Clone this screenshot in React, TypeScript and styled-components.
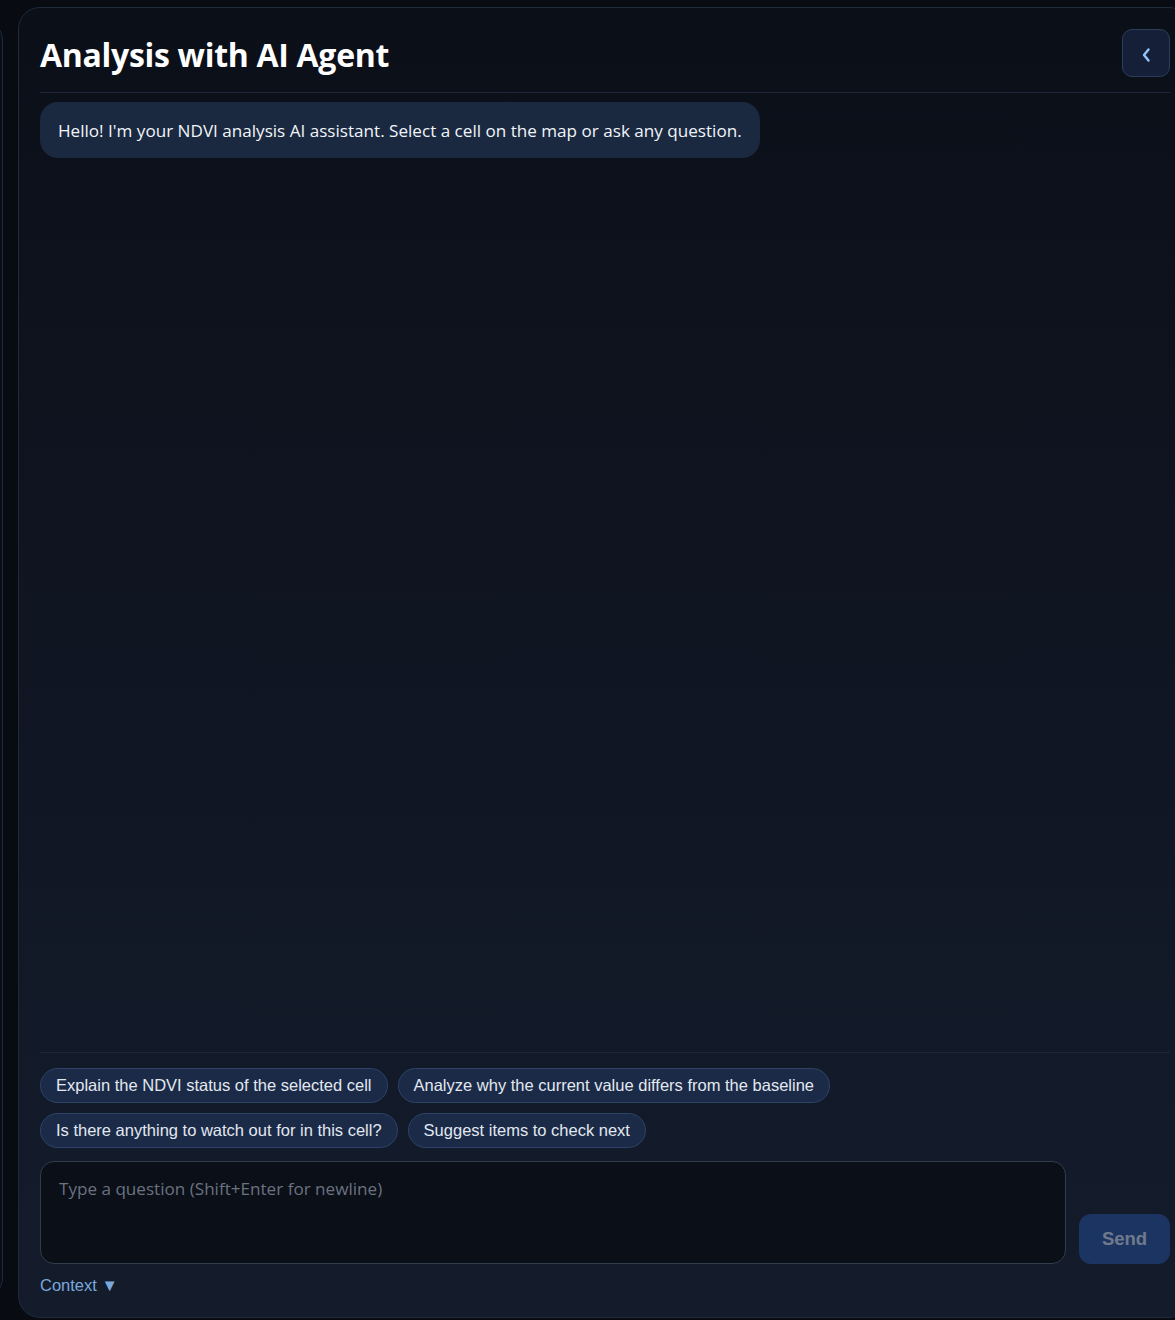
import React from "react";
import styled, { createGlobalStyle } from "styled-components";

const COLORS = {
  page: "#080b11",
  border: "#1f2a3b",
  divider: "#1c2636",
  bubble: "#1a2840",
  chip: "#1a2a47",
  chipBorder: "#2d4468",
  text: "#f1f5f9",
  muted: "#6b7280",
  link: "#7aa7dc",
};

const GlobalStyle = createGlobalStyle`
  html, body {
    margin: 0;
    padding: 0;
    background: ${COLORS.page};
    overflow: hidden;
  }
  * {
    box-sizing: border-box;
  }
`;

const Layout = styled.div`
  display: flex;
  gap: 15px;
  height: 1320px;
  padding: 7px 0 2px 0;
`;

const MapPanel = styled.aside`
  flex: 0 0 240px;
  margin-left: -237px;
  margin-top: 13px;
  margin-bottom: 20px;
  background: #0a0e16;
  border: 1px solid ${COLORS.border};
  border-radius: 20px;
`;

const ChatPanel = styled.section`
  flex: 0 0 1173px;
  display: flex;
  flex-direction: column;
  padding: 0 20px 0 21px;
  background: linear-gradient(180deg, #0b0f18 0%, #141c2c 100%);
  border: 1px solid ${COLORS.border};
  border-radius: 22px;
`;

const Header = styled.header`
  display: flex;
  align-items: center;
  justify-content: space-between;
  height: 85px;
  padding-top: 6px;
  border-bottom: 1px solid ${COLORS.divider};
`;

const Title = styled.h1`
  margin: 3px 0 0 0;
  font-family: "Open Sans", "Noto Sans", sans-serif;
  font-size: 32px;
  font-weight: 700;
  color: #ffffff;
  letter-spacing: -0.3px;
`;

const ToggleButton = styled.button`
  width: 48px;
  height: 48px;
  display: flex;
  align-items: center;
  justify-content: center;
  padding: 4px 0 0 0;
  background: #152038;
  border: 1px solid #2c3d5c;
  border-radius: 10px;
  color: #93c5fd;
`;

const Messages = styled.div`
  flex: 1;
  padding-top: 9px;
  display: flex;
  flex-direction: column;
  align-items: flex-start;
`;

const Bubble = styled.div`
  background: ${COLORS.bubble};
  border-radius: 18px;
  padding: 0 18px;
  height: 56px;
  display: flex;
  align-items: center;
  font-family: "Open Sans", "Noto Sans", sans-serif;
  font-size: 17.1px;
  color: ${COLORS.text};
`;

const Composer = styled.div`
  border-top: 1px solid ${COLORS.divider};
  padding-top: 15px;
  padding-bottom: 22px;
`;

const Suggestions = styled.div`
  display: flex;
  flex-wrap: wrap;
  gap: 10px;
  width: 820px;
`;

const Chip = styled.button`
  height: 35px;
  padding: 0 15px;
  background: ${COLORS.chip};
  border: 1px solid ${COLORS.chipBorder};
  border-radius: 999px;
  font-family: "Liberation Sans", Arial, sans-serif;
  font-size: 16.5px;
  color: #e2e8f0;
  white-space: nowrap;
`;

const InputRow = styled.div`
  display: flex;
  align-items: flex-end;
  gap: 13px;
  margin-top: 13px;
`;

const QuestionInput = styled.textarea`
  flex: 1;
  height: 103px;
  resize: none;
  padding: 15px 18px;
  background: #0a0f18;
  border: 1px solid #333c4b;
  border-radius: 14px;
  font-family: "Open Sans", "Noto Sans", sans-serif;
  font-size: 17.1px;
  color: ${COLORS.text};
  outline: none;

  &::placeholder {
    color: #6b7280;
  }
`;

const SendButton = styled.button`
  width: 91px;
  height: 50px;
  background: #1c3462;
  border: none;
  border-radius: 12px;
  font-family: "Liberation Sans", Arial, sans-serif;
  font-size: 18.5px;
  font-weight: 700;
  color: #6f7a8c;
`;

const ContextToggle = styled.button`
  margin-top: 12px;
  padding: 0;
  background: none;
  border: none;
  font-family: "Liberation Sans", Arial, sans-serif;
  font-size: 16.5px;
  color: ${COLORS.link};
`;

const suggestions = [
  "Explain the NDVI status of the selected cell",
  "Analyze why the current value differs from the baseline",
  "Is there anything to watch out for in this cell?",
  "Suggest items to check next",
];

const ChevronLeft = () => (
  <svg width="10" height="16" viewBox="0 0 10 16" fill="none">
    <path
      d="M7.5 2.5 L3 8 L7.5 13.5"
      stroke="currentColor"
      strokeWidth="2.4"
      strokeLinecap="round"
      strokeLinejoin="round"
    />
  </svg>
);

const App = () => {
  return (
    <>
      <GlobalStyle />
      <Layout>
        <MapPanel />
        <ChatPanel>
          <Header>
            <Title>Analysis with AI Agent</Title>
            <ToggleButton aria-label="Collapse panel">
              <ChevronLeft />
            </ToggleButton>
          </Header>

          <Messages>
            <Bubble>
              Hello! I'm your NDVI analysis AI assistant. Select a cell on the
              map or ask any question.
            </Bubble>
          </Messages>

          <Composer>
            <Suggestions>
              {suggestions.map((text) => (
                <Chip key={text}>{text}</Chip>
              ))}
            </Suggestions>

            <InputRow>
              <QuestionInput placeholder="Type a question (Shift+Enter for newline)" />
              <SendButton>Send</SendButton>
            </InputRow>

            <ContextToggle>Context ▼</ContextToggle>
          </Composer>
        </ChatPanel>
      </Layout>
    </>
  );
};

export default App;
